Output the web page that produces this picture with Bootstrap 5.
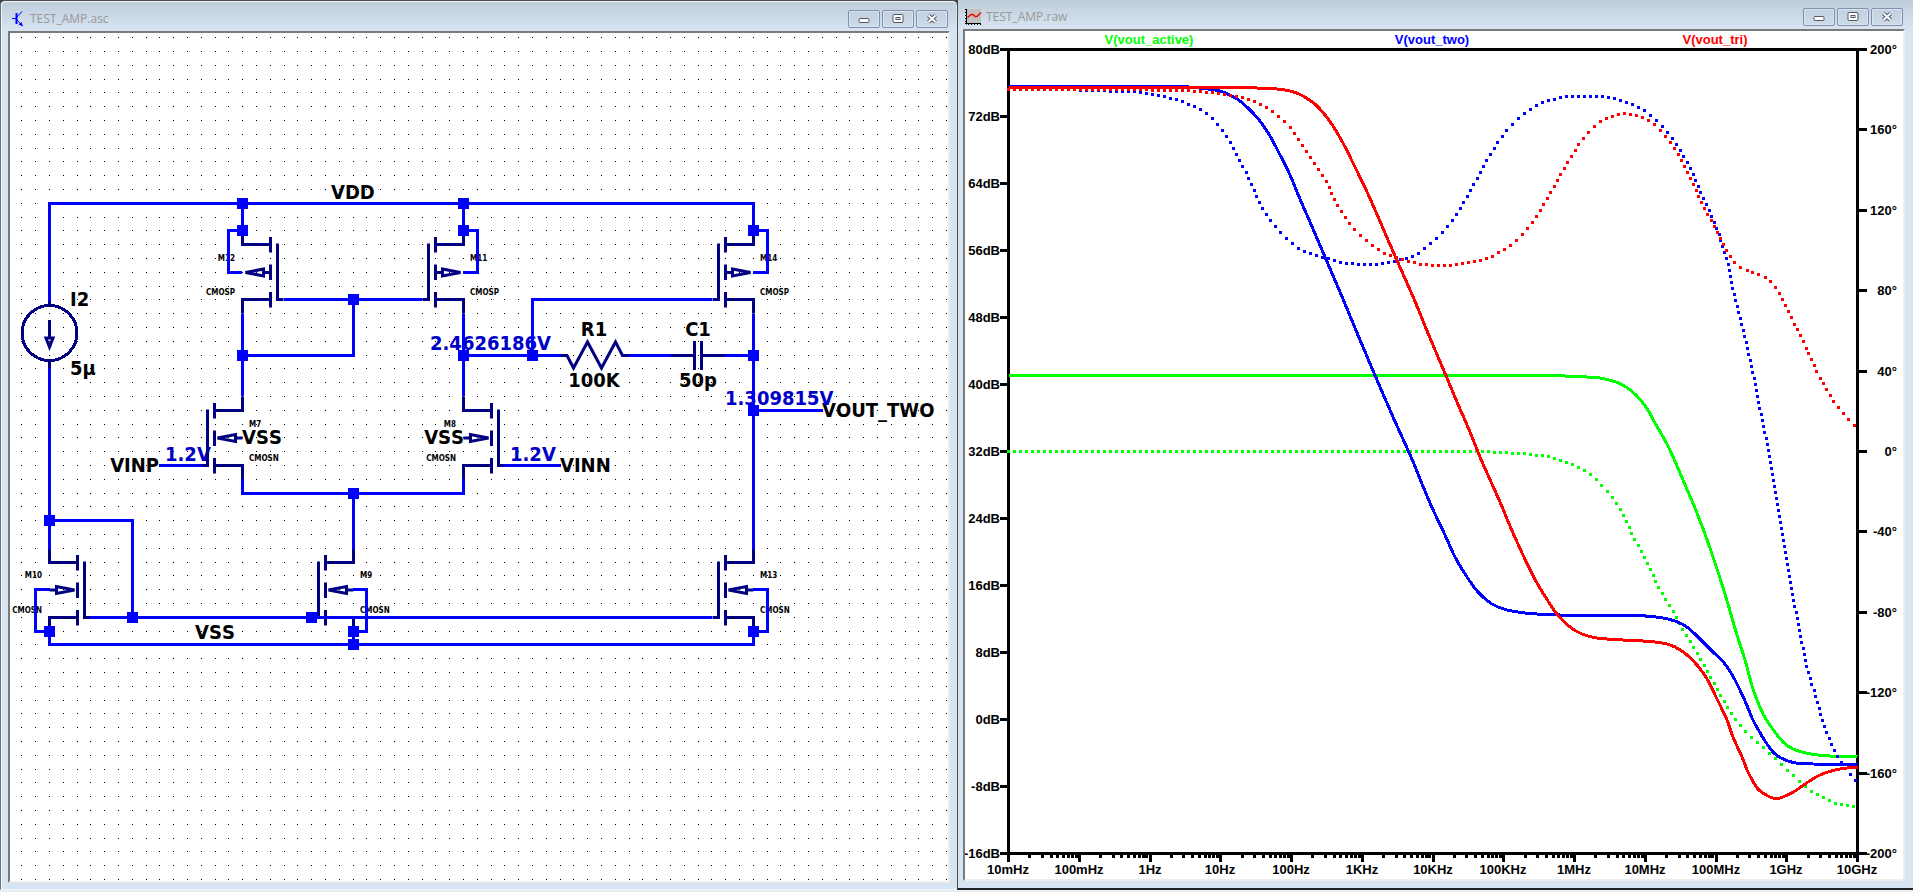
<!DOCTYPE html>
<html lang="en">
<head>
<meta charset="utf-8">
<meta name="viewport" content="width=device-width, initial-scale=1">
<title>TEST_AMP</title>
<link href="https://cdn.jsdelivr.net/npm/bootstrap@5.3.0/dist/css/bootstrap.min.css" rel="stylesheet">
<style>
  body { background: #ececec; }
  .desk { display: grid; grid-template-columns: 957fr 956fr; align-items: start; }
  .cell { background: linear-gradient(#3c3c44 0 8px, transparent 8px); }
  .win { background: #d7e4f2; }
  .win-sch { border: solid; border-width: 1px 0 1px 1px; border-color: #4a4a50 #000 #f4f7fa #6e7176; border-radius: 5px 5px 0 0; box-shadow: inset 1px 1px #f1f6fb; padding: 0 7px 6px; }
  .win-plot { border-left: 1px solid #4c4c50; border-bottom: 2px solid #1d2429; padding: 0 8px 7px 5px; }
  .titlebar { background: linear-gradient(#bfccda, #d7e4f2); font-family: "Open Sans", "Noto Sans", sans-serif; font-size: 12px; line-height: 18px; color: #999; }
  .win-sch .titlebar { height: 30px; margin: 0 -6px; padding: 5px 8px 0 10px; gap: 6px; border-top: 1px solid #eef4fa; border-radius: 4px 4px 0 0; }
  .win-plot .titlebar { height: 29px; margin: 0 -8px 0 -5px; padding: 5px 10px 0 7px; gap: 4px; }
  .cap-group { gap: 2px; }
  .cap-btn { width: 32px; height: 18px; padding: 0; border: 1px solid #8090ae; border-radius: 2px; background: linear-gradient(#c3d0df, #cedbe9); box-shadow: inset 0 0 0 1px #d9e4f0; display: flex; align-items: center; justify-content: center; }
  .pane { background: #fff; border: 2px solid; border-color: #7a7a7a #ededed #ededed #7a7a7a; }
  .net { font-family: "DejaVu Sans Condensed", "DejaVu Sans", sans-serif; font-weight: 700; font-size: 20px; font-kerning: none; }
  .part { font-family: "DejaVu Sans Condensed", "DejaVu Sans", sans-serif; font-weight: 700; font-size: 8px; }
  .volt { fill: #0000c8; }
  .wire { fill: none; stroke: #00f; stroke-width: 3; shape-rendering: crispEdges; }
  .sym { fill: none; stroke: #000080; stroke-width: 3; }
  .sym .sharp { shape-rendering: crispEdges; }
  .joint { fill: #00f; shape-rendering: crispEdges; }
  .axis { fill: none; stroke: #000; stroke-width: 3; shape-rendering: crispEdges; }
  .scale { font-family: "Liberation Sans", Arial, sans-serif; font-weight: 700; font-size: 13px; }
  .trace { fill: none; stroke-width: 3; shape-rendering: crispEdges; }
  .phase { shape-rendering: crispEdges; }
</style>
</head>
<body>
<main class="desk">
  <div class="cell">
  <section class="win win-sch" aria-label="Schematic">
    <header class="titlebar d-flex align-items-center">
      <svg width="12" height="16" viewBox="0 0 12 16" fill="none" stroke="#00f" aria-hidden="true">
        <path d="M0 7.500H4" stroke-width="1"/><path d="M4.500 2V13" stroke-width="2"/><path d="M5 6L10 .500M5 9L10 14.500"/><path d="M11 15.500L6.500 13.500L9.500 11Z" fill="#00f" stroke="none"/>
      </svg>
      <span>TEST_AMP.asc</span>
      <div class="cap-group d-flex ms-auto">
        <button class="cap-btn" type="button" aria-label="Minimize"><svg width="12" height="10" viewBox="0 0 12 10"><rect x="1" y="4.500" width="10" height="4" rx="1" fill="#fff" stroke="#535666"/></svg></button>
        <button class="cap-btn" type="button" aria-label="Maximize"><svg width="12" height="10" viewBox="0 0 12 10"><rect x="1" y=".500" width="10" height="8" rx="1" fill="#fff" stroke="#535666"/><rect x="4" y="3.500" width="4" height="2" fill="#cdd9e7" stroke="#535666"/></svg></button>
        <button class="cap-btn" type="button" aria-label="Close"><svg width="12" height="10" viewBox="0 0 12 10"><path d="M2.500 1.500L9.500 8M9.500 1.500L2.500 8" stroke="#535666" stroke-width="4"/><path d="M2.500 1.500L9.500 8M9.500 1.500L2.500 8" stroke="#fff" stroke-width="2"/></svg></button>
      </div>
    </header>
    <div class="pane">
      <svg class="d-block w-100" viewBox="10 33 938 848" role="img" aria-label="Two-stage amplifier schematic">
        <defs>
          <g id="fet"><path class="sharp" d="M0 -14V0H-28M-28 -7.500V8M-28 20V35.500M-28 47.500V63M-28 55H0V69M-35 -1V55H-41"/></g>
          <g id="nmos"><use href="#fet"/><path d="M-25 27.500L-7 24V31ZM-7 27.500H0"/></g>
          <g id="pmos"><use href="#fet"/><path d="M-28 28H-21M-21 24.500L-3 28L-21 31.500Z"/></g>
        </defs>
        <path id="grid" fill="#000" shape-rendering="crispEdges"/>
        <g class="net">
          <text x="331" y="199">VDD</text>
          <text x="70" y="306">I2</text>
          <text x="70" y="375">5µ</text>
          <text x="195" y="639">VSS</text>
          <text x="159" y="472" text-anchor="end">VINP</text>
          <text x="242" y="444">VSS</text>
          <text x="464" y="444" text-anchor="end">VSS</text>
          <text x="560" y="472">VINN</text>
          <text x="594" y="336" text-anchor="middle">R1</text>
          <text x="594" y="387" text-anchor="middle">100K</text>
          <text x="698" y="336" text-anchor="middle">C1</text>
          <text x="698" y="387" text-anchor="middle">50p</text>
          <text x="822" y="417">VOUT_TWO</text>
          <g class="volt">
            <text x="165" y="461">1.2V</text>
            <text x="510" y="461">1.2V</text>
            <text x="430" y="350">2.4626186V</text>
            <text x="725" y="405">1.309815V</text>
          </g>
        </g>
        <g class="part">
          <text x="235" y="261" text-anchor="end">M12</text><text x="235" y="295" text-anchor="end">CMOSP</text>
          <text x="470" y="261">M11</text><text x="470" y="295">CMOSP</text>
          <text x="760" y="261">M14</text><text x="760" y="295">CMOSP</text>
          <text x="249" y="427">M7</text><text x="249" y="461">CMOSN</text>
          <text x="456" y="427" text-anchor="end">M8</text><text x="456" y="461" text-anchor="end">CMOSN</text>
          <text x="42" y="578" text-anchor="end">M10</text><text x="42" y="613" text-anchor="end">CMOSN</text>
          <text x="360" y="578">M9</text><text x="360" y="613">CMOSN</text>
          <text x="760" y="578">M13</text><text x="760" y="613">CMOSN</text>
        </g>
        <g class="sym">
          <use href="#pmos" transform="translate(242.500 244.500) scale(-1 1)"/>
          <use href="#pmos" transform="translate(463.500 244.500)"/>
          <use href="#pmos" transform="translate(753.500 244.500)"/>
          <use href="#nmos" transform="translate(242.500 410.500)"/>
          <use href="#nmos" transform="translate(463.500 410.500) scale(-1 1)"/>
          <use href="#nmos" transform="translate(49.500 562.500) scale(-1 1)"/>
          <use href="#nmos" transform="translate(353.500 562.500)"/>
          <use href="#nmos" transform="translate(753.500 562.500)"/>
          <circle class="sharp" cx="49.500" cy="333" r="27.500"/>
          <path class="sharp" d="M49.500 300V306M49.500 360V368M49.500 320V338"/>
          <path d="M46 338H53L49.500 347Z"/>
          <path d="M561 355.500H567L573.500 368L587.500 342L601.500 368L615.500 342L622.500 355.500H629"/>
          <path class="sharp" d="M671 355.500H694.500M694.500 341V370M701.500 341V370M701.500 355.500H725"/>
        </g>
        <path class="wire" d="M49.500 301V203.500H753.500V231M242.500 203.500V231M463.500 203.500V231
          M242.500 230.500H228.500V272.500H242M463.500 230.500H477.500V272.500H463M753.500 230.500H767.500V272.500H753
          M284 299.500H422M353.500 299.500V355.500H242.500M242.500 314V396M463.500 314V396
          M463.500 355.500H561M532.500 355.500V299.500H712M629 355.500H671M725 355.500H753.500M753.500 314V549M753.500 410.500H823
          M159 465.500H202M504 465.500H561M242.500 479V493.500H463.500V479M353.500 493.500V549
          M49.500 368V549M49.500 520.500H132.500V617.500M90 617.500H712
          M50 589.500H35.500V631.500H49.500M353 589.500H366.500V631.500H353.500M753 589.500H767.500V631.500H753.500
          M49.500 631V644.500H753.500V631M353.500 631V644"/>
        <path class="joint" id="joints"/>
      </svg>
    </div>
  </section>
  </div>

  <section class="win win-plot" aria-label="Waveform">
    <header class="titlebar d-flex align-items-center">
      <svg width="17" height="17" viewBox="0 0 17 17" aria-hidden="true">
        <path fill="#c0c0c0" d="M2 0H16V14H2Z"/><path d="M1.500 0V15.500M0 14.500H16" stroke="#000" fill="none"/><path d="M.500 0V15" stroke="#000" stroke-dasharray="1 2"/><path d="M3 15.500H16" stroke="#000" stroke-dasharray="1 2"/><path d="M2.500 8.500L6 5.500H8L10 7.500H12L16 3.500" fill="none" stroke="#f00" stroke-width="1.500"/>
      </svg>
      <span>TEST_AMP.raw</span>
      <div class="cap-group d-flex ms-auto">
        <button class="cap-btn" type="button" aria-label="Minimize"><svg width="12" height="10" viewBox="0 0 12 10"><rect x="1" y="4.500" width="10" height="4" rx="1" fill="#fff" stroke="#535666"/></svg></button>
        <button class="cap-btn" type="button" aria-label="Maximize"><svg width="12" height="10" viewBox="0 0 12 10"><rect x="1" y=".500" width="10" height="8" rx="1" fill="#fff" stroke="#535666"/><rect x="4" y="3.500" width="4" height="2" fill="#cdd9e7" stroke="#535666"/></svg></button>
        <button class="cap-btn" type="button" aria-label="Close"><svg width="12" height="10" viewBox="0 0 12 10"><path d="M2.500 1.500L9.500 8M9.500 1.500L2.500 8" stroke="#535666" stroke-width="4"/><path d="M2.500 1.500L9.500 8M9.500 1.500L2.500 8" stroke="#fff" stroke-width="2"/></svg></button>
      </div>
    </header>
    <div class="pane">
      <svg class="d-block w-100" viewBox="965 31 938 848" role="img" aria-label="Gain and phase against frequency">
        <g class="scale" text-anchor="middle">
          <text x="1149" y="44" fill="#0f0">V(vout_active)</text>
          <text x="1432" y="44" fill="#00f">V(vout_two)</text>
          <text x="1715" y="44" fill="#f00">V(vout_tri)</text>
        </g>
        <g class="scale" id="labels"></g>
        <path class="axis" id="axes"/>
        <g id="traces"></g>
      </svg>
    </div>
  </section>
</main>

<script>
  // schematic dot grid
  let dots = '';
  for (let i = 0; i < 68; i++) {
    for (let j = 0; j < 62; j++) {
      dots += `M${21 + Math.ceil(13.8 * i)} ${Math.ceil(36.7 + 13.8 * j)}h1v1h-1z`;
    }
  }
  document.getElementById('grid').setAttribute('d', dots);

  // wire junctions
  const joints = [[242,203],[463,203],[242,230],[463,230],[753,230],[353,299],[242,355],[463,355],[532,355],
    [753,355],[753,410],[353,493],[49,520],[132,617],[311,617],[49,631],[353,631],[353,644],[753,631]];
  document.getElementById('joints').setAttribute('d', joints.map(([x, y]) => `M${x - 5} ${y - 5}h11v11h-11z`).join(''));

  // plot frame, ticks and scales
  const L = 1008.5, R = 1857.5, T = 49.5, B = 853.5;
  let axes = `M${L} ${T}H${R}V${B}H${L}Z`, labels = '';
  for (let i = 0; i <= 12; i++) {
    const y = T + 67 * i;
    axes += `M1000 ${y}H${L}`;
    labels += `<text x="1000" y="${Math.round(y + 4)}" text-anchor="end">${80 - 8 * i}dB</text>`;
  }
  for (let i = 0; i <= 10; i++) {
    const y = Math.round(T + 80.4 * i - .5) + .5;
    axes += `M${R} ${y}H1867`;
    labels += `<text x="1897" y="${Math.round(y + 4)}" text-anchor="end">${200 - 40 * i}°</text>`;
  }
  const decades = ['10mHz','100mHz','1Hz','10Hz','100Hz','1KHz','10KHz','100KHz','1MHz','10MHz','100MHz','1GHz','10GHz'];
  decades.forEach((name, i) => {
    const x = L + 70.75 * i;
    axes += `M${Math.floor(x) + .5} ${B}V862`;
    labels += `<text x="${Math.floor(x)}" y="874" text-anchor="middle">${name}</text>`;
    if (i < 12) for (let n = 2; n < 10; n++) axes += `M${Math.floor(x + 70.75 * Math.log10(n)) + .5} ${B}V858`;
  });
  document.getElementById('axes').setAttribute('d', axes);
  document.getElementById('labels').innerHTML = labels;

  // traces, as x y pairs
  const traces = [
    ['#0f0', 'phase', '1008.5 451.5 1200 451.5 1400 451.5 1475 451.5 1500 452.5 1520 453.5 1533 455 1550 457 1560 460 1572 464 1584 470 1595 478 1604 488 1613 498 1620 509 1627 523 1634 538 1640 548 1648 565 1656 582 1665 599 1676 616 1682 628 1697 653 1707 671 1717 689 1728 708 1740 725 1750 736 1765 749 1780 763 1795 777 1810 790 1827 799 1838 804 1857 807.5'],
    ['#0f0', 'trace', '1008.5 375.5 1300 375.5 1545 375.5 1587 377 1600 378 1616 382 1626 387 1636 395 1648 410 1655 423 1662 435 1670 450 1683 480 1697 513 1710 548 1725 594 1737 635 1745 660 1753 689 1763 714 1772 728 1783 742 1793 749 1808 753.5 1830 756 1857.5 756.5'],
    ['#00f', 'phase', '1008.5 89 1075 90 1110 91 1135 92 1158 95 1183 102 1200 109 1212 118 1221 129 1230 142 1240 161 1250 181 1260 204 1268 217 1279 231 1290 242 1305 252 1318 256 1332 260 1345 263 1360 264.5 1380 264 1400 260 1413 256 1430 244 1452 221 1463 203 1474 184 1487 160 1498 142 1510 127 1525 113 1542 103 1560 98 1573 96.5 1602 96.5 1620 100 1638 107 1654 118 1667 132 1679 148 1692 172 1703 197 1717 229 1728 264 1734 293 1742 325 1752 368 1758 400 1767 442 1775 487 1783 538 1790 577 1793 597 1799 627 1807 667 1817 700 1824 726 1833 747 1839 759 1847 770 1856 781'],
    ['#00f', 'trace', '1008.5 86.5 1100 86.5 1180 86.5 1208 89 1220 91 1230 95 1240 101 1250 110 1260 121 1270 136 1278 151 1290 175 1297 192 1310 222 1325 257 1343 299 1360 340 1377 380 1393 417 1411 457 1430 503 1445 535 1455 557 1467 577 1478 592 1492 604 1507 610 1530 613.5 1560 615 1600 615.5 1637 615.5 1660 617.5 1675 621 1687 627 1700 639 1713 652 1725 664 1735 680 1745 701 1753 720 1765 741 1773 752 1780 757.5 1793 762.5 1813 764 1857.5 764.5'],
    ['#f00', 'phase', '1008.5 89.5 1080 89.5 1150 90 1190 91 1215 93 1240 97 1255 102 1271 110 1283 120 1293 131 1305 149 1315 164 1327 183 1336 202 1347 220 1360 235 1370 243 1382 252 1400 259 1415 263 1433 265.5 1452 265 1470 262 1488 258 1507 248 1522 235 1534 220 1545 202 1559 178 1574 152 1586 135 1602 121 1620 114.5 1632 114.5 1644 118 1660 130 1677 152 1691 179 1702 203 1712 222 1722 242 1732 259 1742 268 1760 275 1771 282 1779 293 1790 314 1804 343 1818 374 1832 399 1849 420 1856 426'],
    ['#f00', 'trace', '1008.5 87.5 1120 87.5 1233 87.5 1270 88.5 1285 90 1295 92.5 1303 96 1316 105 1325 115 1333 126 1343 143 1355 167 1368 194 1382 226 1395 256 1414 299 1430 338 1447 378 1457 402 1470 432 1480 457 1500 502 1510 526 1523 555 1537 583 1548 601 1557 614 1570 627 1582 634 1597 638 1623 640 1643 641 1667 644 1682 651 1697 665 1707 679 1717 699 1727 720 1733 737 1742 757 1748 772 1758 789 1770 797 1777 798.5 1783 797 1795 791 1808 782 1820 775 1835 770 1847 768 1857.5 768']
  ];
  // smooth curve through the points
  function curve(text) {
    const v = text.split(' ').map(Number), p = [];
    for (let i = 0; i < v.length; i += 2) p.push([v[i], v[i + 1]]);
    const slope = p.map((q, i) => {
      const a = p[Math.max(i - 1, 0)], b = p[Math.min(i + 1, p.length - 1)];
      return (b[1] - a[1]) / (b[0] - a[0]);
    });
    let d = `M${p[0]}`;
    for (let i = 1; i < p.length; i++) {
      const h = (p[i][0] - p[i - 1][0]) / 3;
      d += `C${p[i - 1][0] + h} ${p[i - 1][1] + h * slope[i - 1]} ${p[i][0] - h} ${p[i][1] - h * slope[i]} ${p[i]}`;
    }
    return d;
  }
  // square dots, six units apart along the steeper axis
  function dotted(d) {
    const path = document.createElementNS('http://www.w3.org/2000/svg', 'path');
    path.setAttribute('d', d);
    const total = path.getTotalLength();
    let out = '', last = null, run = 6;
    for (let s = 0; s <= total; s += .5) {
      const q = path.getPointAtLength(s);
      if (last) run += Math.max(Math.abs(q.x - last.x), Math.abs(q.y - last.y));
      if (run >= 5.999) {
        out += `M${Math.floor(q.x) - 1} ${Math.floor(q.y) - 1}h3v3h-3z`;
        run = Math.max(0, run - 6);
      }
      last = q;
    }
    return out;
  }
  document.getElementById('traces').innerHTML = traces.map(([color, kind, points]) => {
    const d = curve(points);
    return kind === 'phase' ? `<path class="phase" fill="${color}" d="${dotted(d)}"/>` : `<path class="trace" stroke="${color}" d="${d}"/>`;
  }).join('');
</script>
<script src="https://cdn.jsdelivr.net/npm/bootstrap@5.3.0/dist/js/bootstrap.bundle.min.js"></script>
</body>
</html>
